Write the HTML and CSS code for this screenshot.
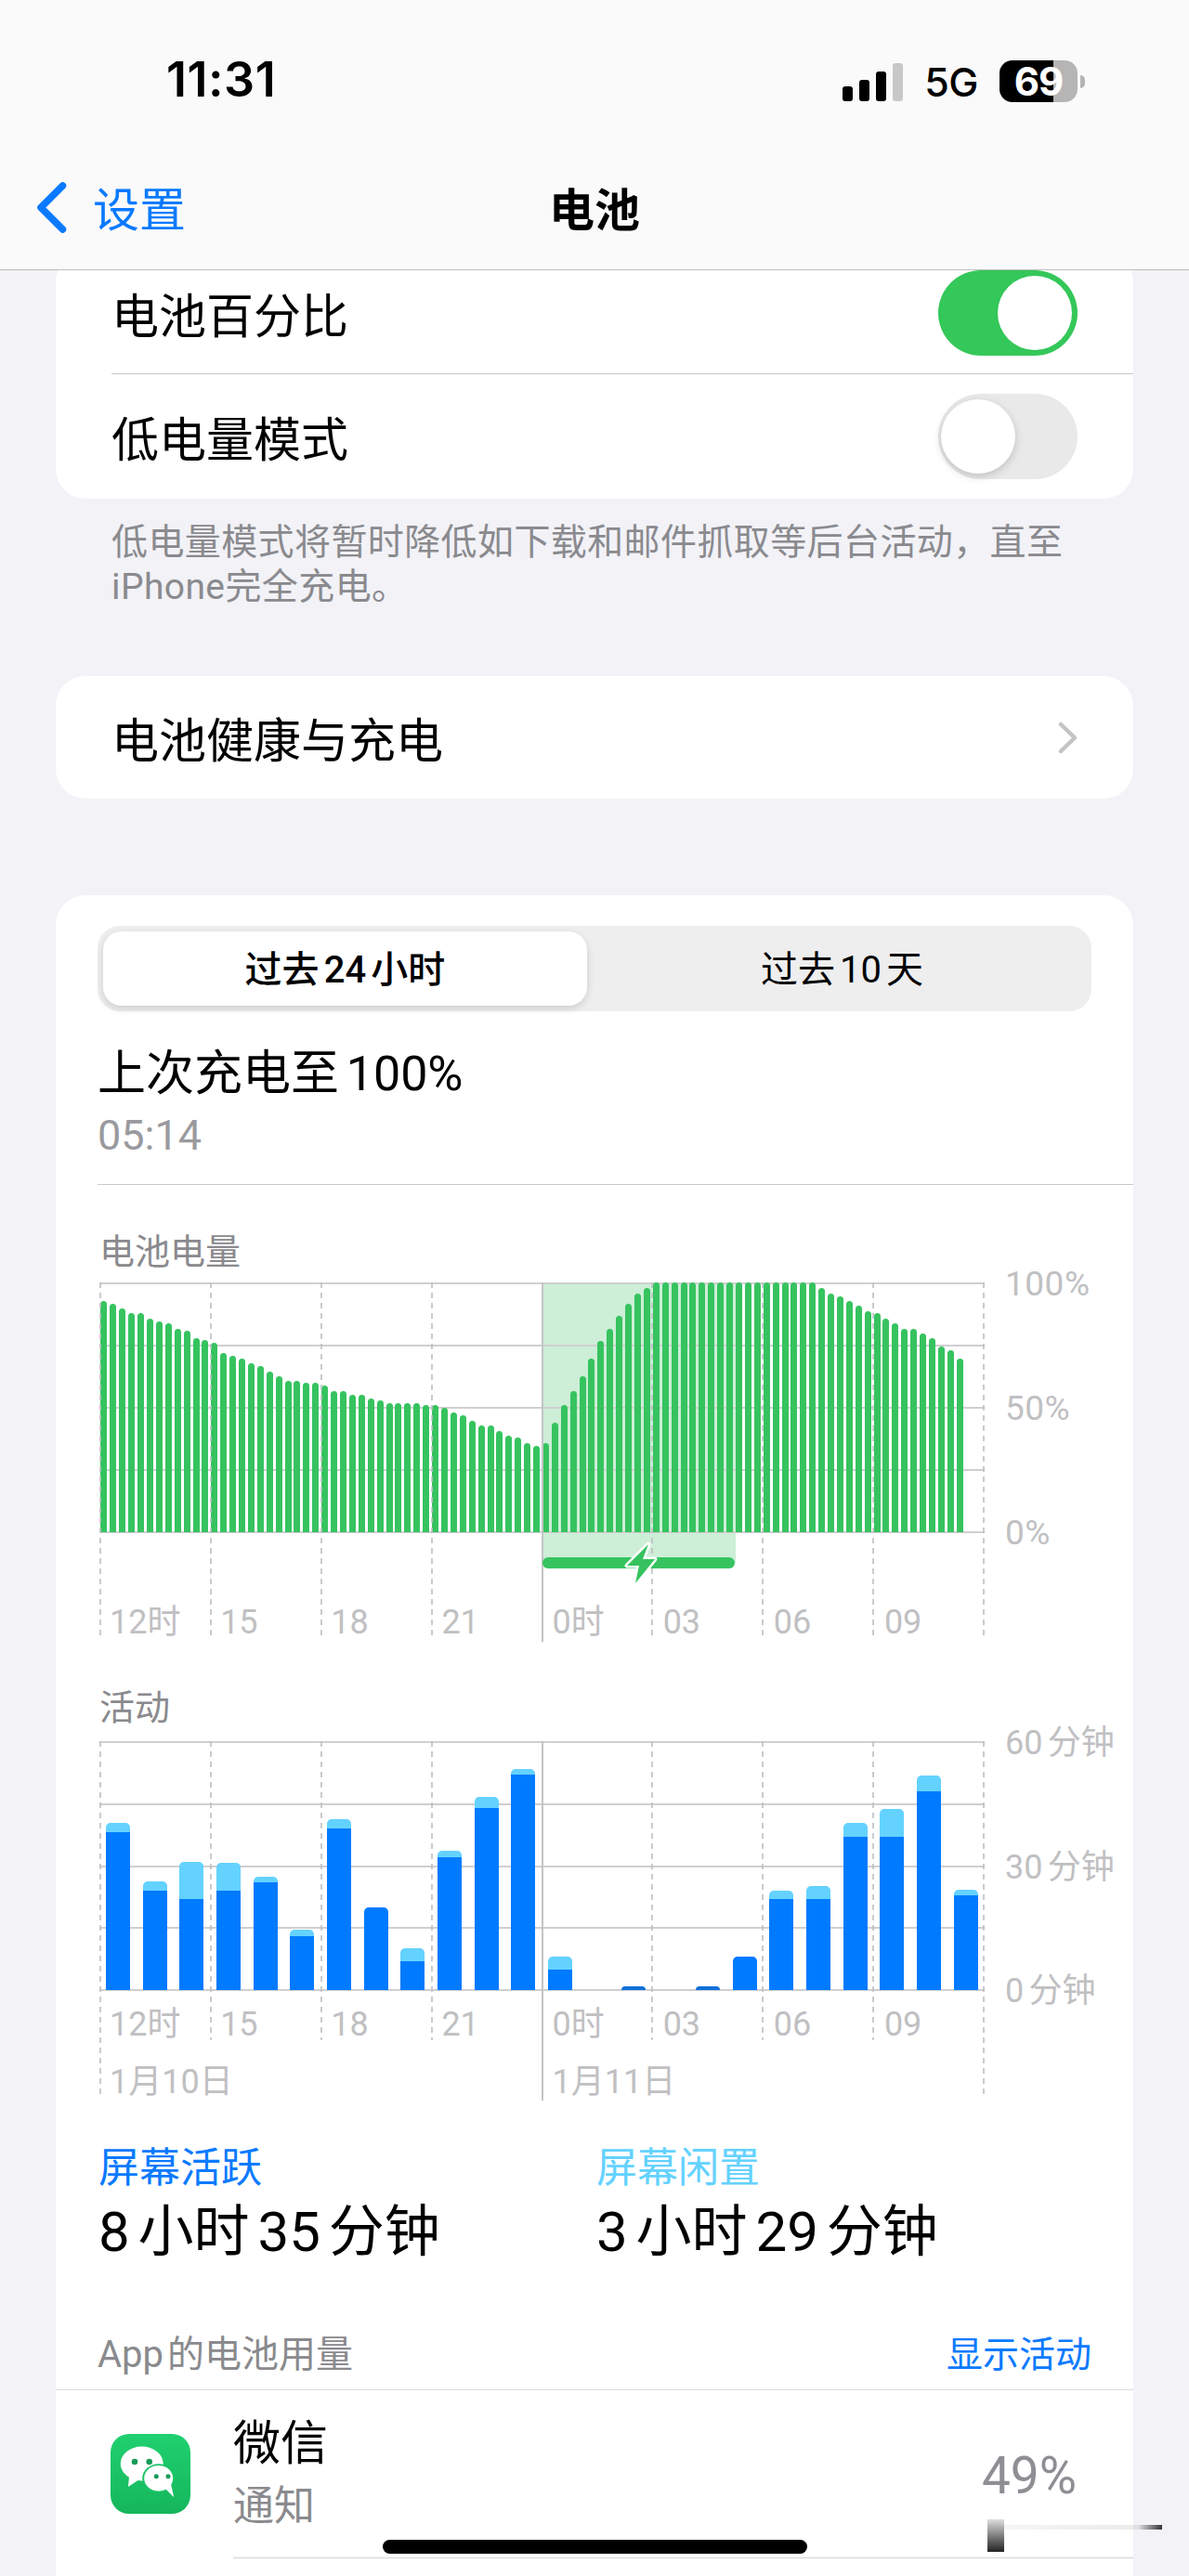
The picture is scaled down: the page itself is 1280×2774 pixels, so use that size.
FILE: index.html
```html
<!DOCTYPE html>
<html lang="zh-CN">
<head>
<meta charset="utf-8">
<title>电池</title>
<link rel="stylesheet" href="styles.css">
</head>
<body>
<div class="phone">
  <header class="top">
    <div class="status">
      <div class="clock">11:31</div>
      <div class="status-right">
        <div class="signal"><i class="s1"></i><i class="s2"></i><i class="s3"></i><i class="s4"></i></div>
        <div class="net">5G</div>
        <div class="battery"><span>69</span></div>
        <div class="nub"></div>
      </div>
    </div>
    <nav class="navbar">
      <div class="back">
        <svg class="back-icon" viewBox="0 0 33 55"><path d="M28.5 4 L5 27.5 L28.5 51" fill="none" stroke="#0a7aff" stroke-width="7.5" stroke-linecap="round" stroke-linejoin="round"/></svg>
        <span>设置</span>
      </div>
      <div class="title">电池</div>
      <div></div>
    </nav>
  </header>

  <main class="content">
    <section class="card">
      <div class="row row-first">
        <span>电池百分比</span>
        <div class="toggle on"><i></i></div>
      </div>
      <div class="row row-second">
        <span>低电量模式</span>
        <div class="toggle off"><i></i></div>
      </div>
    </section>
    <p class="footnote">低电量模式将暂时降低如下载和邮件抓取等后台活动，直至<br>iPhone完全充电。</p>

    <section class="card card-link">
      <span>电池健康与充电</span>
      <svg class="chevron" viewBox="0 0 21 35"><path d="M3 3 L18 17.5 L3 32" fill="none" stroke="#c4c4c7" stroke-width="4.5" stroke-linecap="round" stroke-linejoin="round"/></svg>
    </section>

    <section class="card card-usage">
      <div class="segment">
        <div class="seg seg-on">过去 24 小时</div>
        <div class="seg seg-off">过去 10 天</div>
      </div>
      <div class="last-title">上次充电至 100%</div>
      <div class="last-time">05:14</div>
      <div class="rule"></div>

      <div class="section-label first">电池电量</div>
      <div class="chart">
        <div class="shade"></div>
        <div class="hlines h-battery"><i></i><i></i><i></i><i></i><i></i></div>
        <div class="green-bars">
          <b style="height:92.5%"></b><b style="height:91.6%"></b><b style="height:89.7%"></b><b style="height:87.8%"></b><b style="height:87.8%"></b><b style="height:85.6%"></b><b style="height:84.5%"></b><b style="height:83.7%"></b><b style="height:81.5%"></b><b style="height:80.7%"></b>
          <b style="height:77.8%"></b><b style="height:76.8%"></b><b style="height:75.7%"></b><b style="height:71.6%"></b><b style="height:70.8%"></b><b style="height:69.7%"></b><b style="height:67.7%"></b><b style="height:66.7%"></b><b style="height:64.5%"></b><b style="height:62.6%"></b>
          <b style="height:60.7%"></b><b style="height:60.7%"></b><b style="height:59.8%"></b><b style="height:59.8%"></b><b style="height:58.6%"></b><b style="height:56.6%"></b><b style="height:56.6%"></b><b style="height:54.9%"></b><b style="height:54.9%"></b><b style="height:53.7%"></b>
          <b style="height:52.7%"></b><b style="height:51.6%"></b><b style="height:51.6%"></b><b style="height:51.6%"></b><b style="height:51.6%"></b><b style="height:50.8%"></b><b style="height:50.8%"></b><b style="height:49.7%"></b><b style="height:47.8%"></b><b style="height:46.7%"></b>
          <b style="height:44.5%"></b><b style="height:42.7%"></b><b style="height:42.7%"></b><b style="height:40.7%"></b><b style="height:38.6%"></b><b style="height:37.8%"></b><b style="height:35.7%"></b><b style="height:34.7%"></b><b style="height:35.7%"></b><b style="height:43.9%"></b>
          <b style="height:50.8%"></b><b style="height:56.6%"></b><b style="height:62.6%"></b><b style="height:69.7%"></b><b style="height:76.6%"></b><b style="height:81.5%"></b><b style="height:86.7%"></b><b style="height:91.4%"></b><b style="height:95.4%"></b><b style="height:97.8%"></b>
          <b style="height:100%"></b><b style="height:100%"></b><b style="height:100%"></b><b style="height:100%"></b><b style="height:100%"></b><b style="height:100%"></b><b style="height:100%"></b><b style="height:100%"></b><b style="height:100%"></b><b style="height:100%"></b>
          <b style="height:100%"></b><b style="height:100%"></b><b style="height:100%"></b><b style="height:100%"></b><b style="height:100%"></b><b style="height:100%"></b><b style="height:100%"></b><b style="height:100%"></b><b style="height:97.8%"></b><b style="height:95.4%"></b>
          <b style="height:94.4%"></b><b style="height:92.5%"></b><b style="height:90.7%"></b><b style="height:88.6%"></b><b style="height:87.8%"></b><b style="height:85.6%"></b><b style="height:83.7%"></b><b style="height:81.5%"></b><b style="height:81.5%"></b><b style="height:79.6%"></b>
          <b style="height:77.8%"></b><b style="height:74.5%"></b><b style="height:72.7%"></b><b style="height:69.7%"></b>
        </div>
        <div class="vlines v-battery"><i></i><i></i><i></i><i></i><i class="solid"></i><i></i><i></i><i></i><i></i></div>
        <div class="charge-bar"></div>
        <svg class="bolt" viewBox="-4 -4 38 51"><path d="M23 1 L0 24 L13 24 L9 43 L30 17 L17 17 Z" fill="#36c35f" stroke="#fff" stroke-width="5" stroke-linejoin="round" paint-order="stroke"/></svg>
        <div class="times times-battery"><span>12时</span><span>15</span><span>18</span><span>21</span><span>0时</span><span>03</span><span>06</span><span>09</span></div>
        <div class="yaxis y-battery"><span>100%</span><span>50%</span><span>0%</span></div>
      </div>

      <div class="section-label second">活动</div>
      <div class="chart">
        <div class="hlines h-activity"><i></i><i></i><i></i><i></i><i></i></div>
        <div class="blue-bars">
          <div class="col"><i class="idle" style="height:4%"></i><i class="act" style="height:63.3%"></i></div>
          <div class="col"><i class="idle" style="height:3.7%"></i><i class="act" style="height:39.9%"></i></div>
          <div class="col"><i class="idle" style="height:14.9%"></i><i class="act" style="height:36.6%"></i></div>
          <div class="col"><i class="idle" style="height:11.2%"></i><i class="act" style="height:39.9%"></i></div>
          <div class="col"><i class="idle" style="height:2.1%"></i><i class="act" style="height:43.4%"></i></div>
          <div class="col"><i class="idle" style="height:2.7%"></i><i class="act" style="height:21.5%"></i></div>
          <div class="col"><i class="idle" style="height:4%"></i><i class="act" style="height:64.8%"></i></div>
          <div class="col"><i class="act" style="height:33.2%"></i></div>
          <div class="col"><i class="idle" style="height:5.1%"></i><i class="act" style="height:11.6%"></i></div>
          <div class="col"><i class="idle" style="height:2.6%"></i><i class="act" style="height:53.4%"></i></div>
          <div class="col"><i class="idle" style="height:4.5%"></i><i class="act" style="height:73.3%"></i></div>
          <div class="col"><i class="idle" style="height:2.1%"></i><i class="act" style="height:86.7%"></i></div>
          <div class="col"><i class="idle" style="height:5.1%"></i><i class="act" style="height:8.2%"></i></div>
          <div class="col"></div>
          <div class="col"><i class="act dim" style="height:1.5%"></i></div>
          <div class="col"></div>
          <div class="col"><i class="act dim" style="height:1.5%"></i></div>
          <div class="col"><i class="act" style="height:13.3%"></i></div>
          <div class="col"><i class="idle" style="height:3.4%"></i><i class="act" style="height:36.6%"></i></div>
          <div class="col"><i class="idle" style="height:5.2%"></i><i class="act" style="height:36.6%"></i></div>
          <div class="col"><i class="idle" style="height:5.6%"></i><i class="act" style="height:61.4%"></i></div>
          <div class="col"><i class="idle" style="height:11.4%"></i><i class="act" style="height:61.4%"></i></div>
          <div class="col"><i class="idle" style="height:6.2%"></i><i class="act" style="height:80%"></i></div>
          <div class="col"><i class="idle" style="height:2.1%"></i><i class="act" style="height:38.2%"></i></div>
        </div>
        <div class="vlines v-activity"><i class="tall"></i><i></i><i></i><i></i><i class="solid"></i><i></i><i></i><i></i><i class="tall"></i></div>
        <div class="times times-activity"><span>12时</span><span>15</span><span>18</span><span>21</span><span>0时</span><span>03</span><span>06</span><span>09</span></div>
        <div class="dates"><span>1月10日</span><span>1月11日</span></div>
        <div class="yaxis y-activity"><span>60 分钟</span><span>30 分钟</span><span>0 分钟</span></div>
      </div>

      <div class="stats">
        <div class="stat">
          <div class="stat-label blue">屏幕活跃</div>
          <div class="stat-value">8 小时 35 分钟</div>
        </div>
        <div class="stat">
          <div class="stat-label cyan">屏幕闲置</div>
          <div class="stat-value">3 小时 29 分钟</div>
        </div>
      </div>

      <div class="usage-head">
        <span class="usage-title">App 的电池用量</span>
        <span class="blue">显示活动</span>
      </div>
      <div class="app-row">
        <svg class="wechat" viewBox="0 0 86 86">
          <defs><linearGradient id="wx" x1="0" y1="0" x2="0" y2="1"><stop offset="0" stop-color="#20d06f"/><stop offset="1" stop-color="#15b65c"/></linearGradient></defs>
          <rect width="86" height="86" rx="20" fill="url(#wx)"/>
          <ellipse cx="33.7" cy="32" rx="23" ry="18.5" fill="#fff"/>
          <path d="M20 46 L19 57 L31 49 Z" fill="#fff"/>
          <circle cx="26" cy="30" r="3.3" fill="#1a9c58"/>
          <circle cx="41.7" cy="30" r="3.3" fill="#1a9c58"/>
          <ellipse cx="51.7" cy="47.7" rx="17.5" ry="15.5" fill="#1cc467"/>
          <ellipse cx="51.7" cy="47.7" rx="15.5" ry="13.7" fill="#fff"/>
          <path d="M58 58 L68.3 68.3 L65 54 Z" fill="#fff"/>
          <circle cx="49.3" cy="45.7" r="2.5" fill="#1a9c58"/>
          <circle cx="62" cy="45.7" r="2.5" fill="#1a9c58"/>
        </svg>
        <div class="app-info">
          <div class="app-names">
            <div class="app-name">微信</div>
            <div class="app-sub">通知</div>
          </div>
          <div class="app-pct">49%</div>
        </div>
      </div>
    </section>
  </main>

  <div class="smudge-v"></div>
  <div class="smudge-h"></div>
  <div class="home"></div>
</div>
</body>
</html>
```

FILE: styles.css
```css
* { box-sizing: border-box; }
html, body { margin: 0; padding: 0; }
body {
  font-family: Roboto, "Noto Sans CJK SC", sans-serif;
  color: #000;
  background: #f2f2f7;
}
.phone {
  position: relative;
  width: 1280px;
  height: 2774px;
  overflow: hidden;
  background: #f2f2f7;
}

/* header */
.top {
  position: relative;
  z-index: 2;
  height: 291px;
  padding-top: 60px;
  background: #fafafa;
  border-bottom: 1px solid #bcbcbe;
}
.status {
  display: flex;
  align-items: center;
  justify-content: space-between;
  height: 55px;
  padding: 0 112px 0 179px;
}
.clock {
  margin-bottom: 5px;
  font-family: Inter, sans-serif;
  font-size: 52px;
  font-weight: 600;
  letter-spacing: .5px;
}
.status-right { display: flex; align-items: center; }
.signal { display: flex; align-items: flex-end; gap: 7px; height: 41px; margin-top: 2px; }
.signal i { display: block; width: 11px; background: #000; border-radius: 3px; }
.signal .s1 { height: 16px; }
.signal .s2 { height: 23px; }
.signal .s3 { height: 32px; }
.signal .s4 { height: 41px; background: #c8c8c8; }
.net {
  margin-left: 23px;
  font-family: Inter, sans-serif;
  font-size: 43px;
  font-weight: 500;
  letter-spacing: -.5px;
}
.battery {
  display: flex;
  align-items: center;
  justify-content: center;
  width: 84px;
  height: 45px;
  margin-left: 23px;
  border-radius: 14px;
  background: linear-gradient(90deg, #000 0 58px, #b5b5b5 58px);
  color: #fff;
  font-family: Inter, sans-serif;
  font-size: 42px;
  font-weight: 700;
  letter-spacing: -1px;
}
.nub { width: 5px; height: 14px; margin-left: 3px; background: #b5b5b5; border-radius: 0 7px 7px 0; }
.navbar {
  display: grid;
  grid-template-columns: 1fr auto 1fr;
  align-items: center;
  height: 80px;
  margin-top: 67px;
}
.back { display: flex; align-items: center; gap: 28px; padding-left: 39px; color: #0a7aff; font-size: 50px; }
.back-icon { display: block; width: 33px; height: 55px; margin-top: 3px; }
.title { font-size: 49px; font-weight: 600; }

/* cards */
.content { margin-top: -20px; }
.card {
  margin: 0 60px;
  background: #fff;
  border-radius: 32px;
}
.row {
  display: flex;
  align-items: center;
  justify-content: space-between;
  margin-left: 60px;
  padding-right: 60px;
  font-size: 51px;
}
.row-first { height: 132px; border-bottom: 1px solid #c8c8ca; }
.row-second { height: 134px; }
.toggle {
  display: flex;
  align-items: center;
  width: 150px;
  height: 92px;
  padding: 0 6px;
  border-radius: 46px;
}
.toggle.on { justify-content: flex-end; background: #34c759; }
.toggle.off { padding: 0 3px; background: #e9e9ea; }
.toggle i {
  display: block;
  width: 80px;
  height: 80px;
  border-radius: 50%;
  background: #fff;
}
.toggle.off i { box-shadow: 0 3px 10px rgba(0, 0, 0, .18); }
.footnote {
  margin: 23px 60px 0;
  padding-left: 60px;
  font-size: 39px;
  letter-spacing: .4px;
  line-height: 48px;
  color: #8a8a8e;
}
.card-link {
  display: flex;
  align-items: center;
  justify-content: space-between;
  height: 132px;
  margin-top: 72px;
  padding: 0 60px;
  font-size: 51px;
}
.chevron { display: block; width: 21px; height: 35px; }

/* usage card */
.card-usage { margin-top: 104px; padding-top: 33px; border-radius: 32px 32px 0 0; height: 1850px; }
.segment {
  display: flex;
  width: 1070px;
  height: 92px;
  margin-left: 45px;
  padding: 6px;
  border-radius: 24px;
  background: #eeeeef;
}
.seg {
  display: flex;
  align-items: center;
  justify-content: center;
  flex: 1;
  padding-bottom: 5px;
  font-size: 40px;
  word-spacing: -.12em;
}
.seg-off { padding-left: 12px; }
.seg-on {
  font-weight: 500;
  flex: 0 0 521px;
  background: #fff;
  border-radius: 20px;
  box-shadow: 0 3px 8px rgba(0, 0, 0, .14);
}
.last-title {
  height: 60px;
  margin: 38px 0 0 45px;
  font-size: 52px;
  line-height: 60px;
  word-spacing: -.1em;
}
.last-time {
  margin: 11px 0 0 45px;
  font-size: 45px;
  line-height: 50px;
  color: #9a9a9e;
}
.rule { height: 1px; margin: 27px 0 0 45px; background: #c8c8ca; }
.section-label {
  margin-left: 47px;
  font-size: 38px;
  line-height: 44px;
  color: #8a8a8e;
}
.section-label.first { margin-top: 50px; margin-bottom: 11px; }
.section-label.second { margin-top: 48px; margin-bottom: 14px; }

/* charts */
.chart {
  position: relative;
  width: 953px;
  margin-left: 47px;
}
.shade {
  position: absolute;
  top: 0;
  left: 476px;
  width: 209px;
  height: 302px;
  background: #cdeed7;
}
.hlines {
  position: absolute;
  top: 0;
  left: 0;
  width: 100%;
  display: flex;
  flex-direction: column;
  justify-content: space-between;
}
.h-battery { height: 270px; }
.h-activity { height: 269px; }
.hlines i { display: block; height: 2px; background: #cfcfd1; }
.green-bars {
  position: relative;
  display: flex;
  align-items: flex-end;
  height: 269px;
}
.green-bars b {
  display: block;
  flex: 0 0 7px;
  margin: 0 1.465px;
  border-radius: 3.5px 3.5px 0 0;
  background: #36c35f;
}
.blue-bars {
  position: relative;
  display: flex;
  height: 268px;
}
.col {
  display: flex;
  flex-direction: column;
  justify-content: flex-end;
  flex: 0 0 26px;
  margin: 0 6.854px;
}
.col i { display: block; }
.col i:first-child { border-radius: 5px 5px 0 0; }
.idle { background: #64d2ff; }
.act { background: #007aff; }
.act.dim { background: #0f70d8; }
.vlines {
  position: absolute;
  top: 0;
  left: 0;
  width: 100%;
  display: flex;
  justify-content: space-between;
  align-items: flex-start;
  pointer-events: none;
}
.vlines i {
  display: block;
  width: 2px;
  background: repeating-linear-gradient(180deg, rgba(190, 190, 194, .8) 0 6px, transparent 6px 11px);
}
.vlines i.solid { background: #c4c4c6; }
.v-battery i { height: 382px; }
.v-battery i.solid { height: 387px; }
.v-activity i { height: 322px; }
.v-activity i.tall { height: 380px; }
.v-activity i.solid { height: 387px; }
.charge-bar {
  position: absolute;
  top: 296px;
  left: 477px;
  width: 207px;
  height: 12px;
  border-radius: 6px;
  background: #36c35f;
}
.bolt {
  position: absolute;
  top: 277px;
  left: 564px;
  width: 38px;
  height: 51px;
}
.times {
  position: relative;
  display: grid;
  grid-template-columns: repeat(8, 1fr);
  font-size: 36px;
  line-height: 44px;
  color: #c0c0c2;
}
.times span { height: 44px; padding-left: 11px; }
.times-battery { padding-top: 75px; }
.times-activity { padding-top: 15px; }
.dates {
  position: relative;
  display: grid;
  grid-template-columns: 476.5px 1fr;
  height: 44px;
  margin-top: 18px;
  font-size: 36px;
  line-height: 44px;
  color: #c0c0c2;
}
.dates span { height: 44px; padding-left: 11px; }
.yaxis {
  position: absolute;
  top: 2px;
  left: 975px;
  display: flex;
  flex-direction: column;
  justify-content: space-between;
  font-size: 36px;
  line-height: 0;
  white-space: nowrap;
  word-spacing: -.1em;
  color: #c0c0c2;
}
.y-battery { height: 268px; font-size: 37px; letter-spacing: .5px; }
.y-activity { height: 267px; }

/* totals */
.stats { display: flex; margin: 44px 0 0 46px; }
.stat { flex: 0 0 536px; }
.stat-label { height: 54px; font-size: 44px; line-height: 54px; }
.stat-value {
  height: 70px;
  margin-top: 7px;
  font-size: 60px;
  line-height: 70px;
  word-spacing: -.1em;
}
.blue { color: #0a7aff; }
.cyan { color: #64d2ff; }
.usage-head {
  display: flex;
  justify-content: space-between;
  height: 60px;
  margin: 75px 0 0;
  padding: 0 45px;
  font-size: 39px;
  line-height: 44px;
  color: #8a8a8e;
  border-bottom: 1px solid #dcdcde;
}
.usage-title { font-size: 40px; word-spacing: -.15em; }
.usage-head .blue { color: #0a7aff; }
.app-row { display: flex; height: 181px; }
.wechat {
  display: block;
  flex: 0 0 86px;
  width: 86px;
  height: 86px;
  margin: 47px 46px 0 59px;
}
.app-info {
  display: flex;
  flex: 1;
  justify-content: space-between;
  padding: 28px 61px 0 0;
  border-bottom: 1px solid #d4d4d6;
}
.app-name { height: 60px; font-size: 51px; line-height: 60px; }
.app-sub { height: 50px; margin-top: 12px; font-size: 44px; line-height: 50px; color: #8a8a8e; }
.app-pct { margin-top: 34px; font-size: 55px; line-height: 60px; color: #8e8e93; }

/* overlays along the bottom edge */
.home {
  position: absolute;
  left: 412px;
  top: 2735px;
  width: 457px;
  height: 15px;
  border-radius: 8px;
  background: #000;
}
.smudge-v {
  position: absolute;
  left: 1063px;
  top: 2713px;
  width: 18px;
  height: 35px;
  background: linear-gradient(180deg, rgba(30, 30, 30, .15), #222);
}
.smudge-h {
  position: absolute;
  left: 1081px;
  top: 2719px;
  width: 170px;
  height: 5px;
  background: linear-gradient(90deg, rgba(60, 60, 60, .05), rgba(60, 60, 60, .1) 85%, #333);
}
```
